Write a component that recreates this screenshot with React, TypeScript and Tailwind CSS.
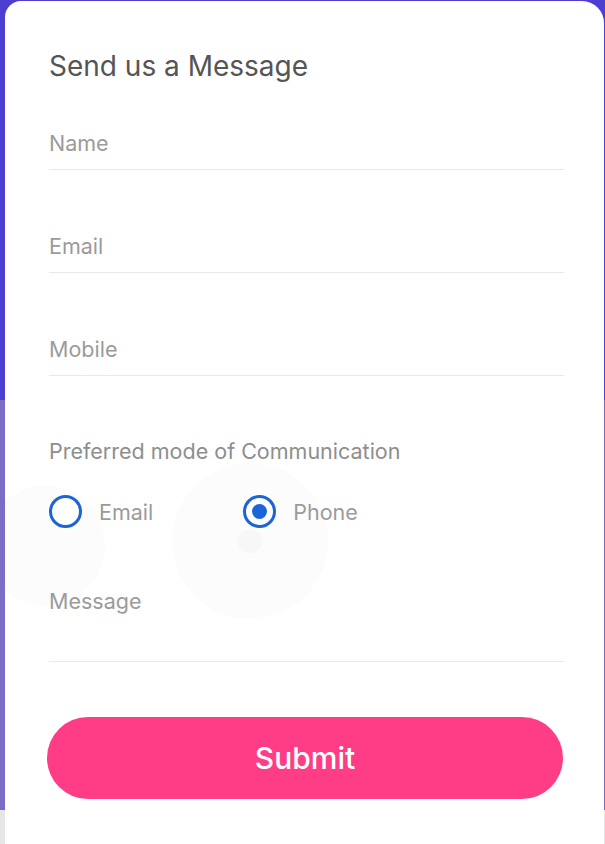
import { useState } from "react";

const font = { fontFamily: "Inter, Roboto, 'Noto Sans', Arial, sans-serif" };

function Field({ label, tall }: { label: string; tall?: boolean }) {
  return (
    <div className={`border-b border-[#e9e9e9] ${tall ? "pb-[47px]" : "pb-[13px]"}`}>
      <div className="text-[21.5px] leading-[26px] text-[#9b9b9b]">{label}</div>
    </div>
  );
}

function Radio({ label, checked, onClick }: { label: string; checked: boolean; onClick: () => void }) {
  return (
    <button type="button" onClick={onClick} className="relative flex items-center gap-[17px] cursor-pointer">
      <span className="relative z-10 w-[33px] h-[33px] rounded-full border-[3px] border-[#1a66d8] bg-white flex items-center justify-center">
        {checked && <span className="w-[15px] h-[15px] rounded-full bg-[#1a66d8]" />}
      </span>
      <span className="relative z-10 text-[21.5px] leading-[26px] text-[#9b9b9b]">{label}</span>
    </button>
  );
}

export default function App() {
  const [mode, setMode] = useState("phone");

  return (
    <div
      style={font}
      className="min-h-[844px] pt-[1px] pl-[5px] pr-[1px] bg-[linear-gradient(to_bottom,#4c3dd3_0px,#4c3dd3_400px,#7a6dc5_400px,#7a6dc5_810px,#e6e6e6_810px)]"
    >
      <div className="relative overflow-hidden min-h-[843px] bg-white rounded-tl-[16px] rounded-tr-[22px] pt-[48px] pl-[44px] pr-[40px]">
        {/* faint ripple traces behind the radios */}
        <div className="absolute left-[-20px] top-[485px] w-[120px] h-[120px] rounded-full bg-[#fcfcfc]" />
        <div className="absolute left-[167px] top-[462px] w-[156px] h-[156px] rounded-full bg-[#fcfcfc]" />
        <div className="absolute left-[233px] top-[528px] w-[24px] h-[24px] rounded-full bg-[#f7f7f7]" />

        <h1 className="relative text-[28px] leading-[34px] text-[#555555]">Send us a Message</h1>

        <div className="relative mt-[47px] flex flex-col gap-[63px]">
          <Field label="Name" />
          <Field label="Email" />
          <Field label="Mobile" />
        </div>

        <div className="relative mt-[62px] text-[21.5px] leading-[26px] text-[#8e8e8e]">
          Preferred mode of Communication
        </div>

        <div className="relative mt-[31px] flex items-center gap-[90px]">
          <Radio label="Email" checked={mode === "email"} onClick={() => setMode("email")} />
          <Radio label="Phone" checked={mode === "phone"} onClick={() => setMode("phone")} />
        </div>

        <div className="relative mt-[60px]">
          <Field label="Message" tall />
        </div>

        <button
          type="button"
          className="relative mt-[55px] -ml-[2px] w-[516px] h-[82px] rounded-full bg-[#ff3d86] text-white text-[30px] font-medium cursor-pointer"
        >
          Submit
        </button>
      </div>
    </div>
  );
}
